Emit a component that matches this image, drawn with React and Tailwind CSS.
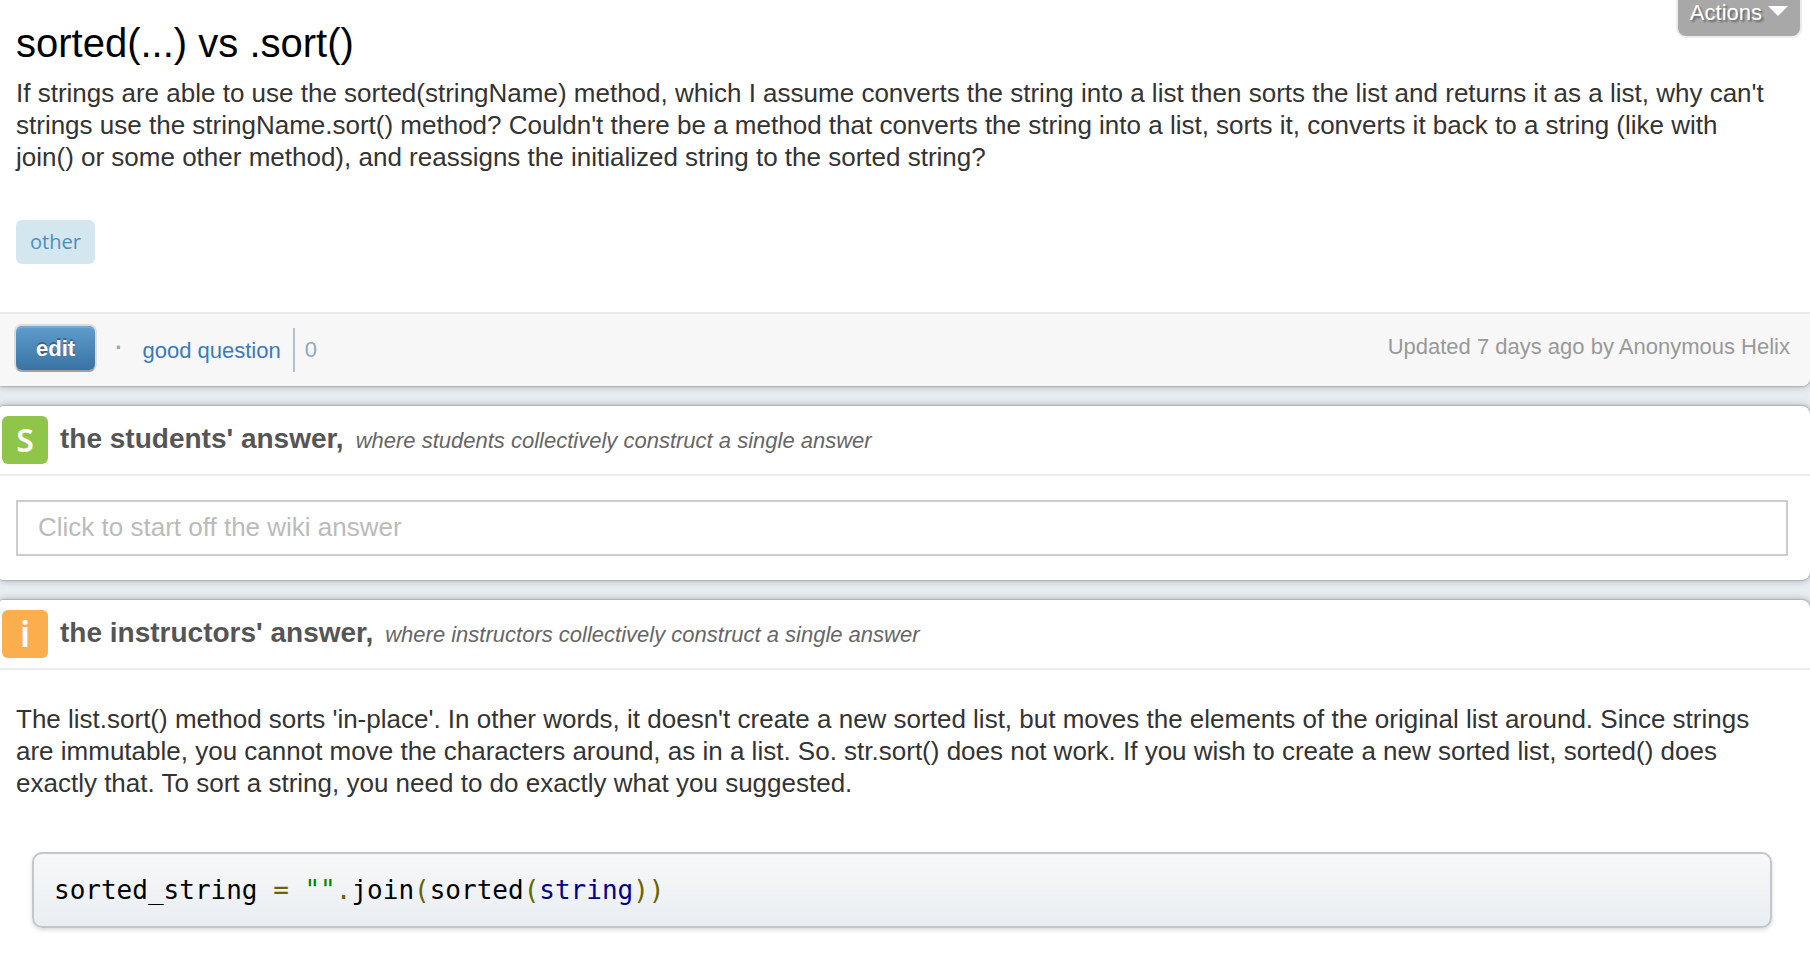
const cardShadow = "shadow-[0_0_2px_rgba(0,0,0,0.45),0_0_8px_rgba(0,0,0,0.3)]";

function AnswerHeader({ badge, title, note }) {
  return (
    <header className="flex items-center gap-3 border-b-2 border-[#ebebeb] pt-[10px] pb-[10px] pl-[2px]">
      {badge}
      <h2 className="flex items-baseline gap-3 text-[28px] leading-[44px] font-bold text-[#555555]">
        {title}
        <span className="text-[22px] font-normal text-[#666666] italic">{note}</span>
      </h2>
    </header>
  );
}

function Badge({ letter, className }) {
  return (
    <span
      className={`flex h-12 w-[46px] items-center justify-center rounded-[6px] font-['Noto_Sans',sans-serif] leading-none font-semibold text-white ${className}`}
    >
      {letter}
    </span>
  );
}

export default function App() {
  return (
    <main className="flex min-h-screen flex-col gap-5 overflow-hidden bg-[#e8edf2] font-['Liberation_Sans',Arial,sans-serif] text-[#333333]">
      <article className={`rounded-br-[8px] bg-white ${cardShadow}`}>
        <div className="relative px-4 pt-[20px] pb-12">
          <button
            type="button"
            className="absolute top-0 right-[8px] flex h-[38px] items-start gap-[6px] rounded-b-[10px] border-2 border-t-0 border-[#ebebeb] bg-[#a8a8a8] px-3 text-[22px] leading-[26px] text-white [text-shadow:2px_2px_2px_rgba(0,0,0,0.4)]"
          >
            Actions
            <svg className="mt-[6px]" width="20" height="10" viewBox="0 0 20 10" aria-hidden="true">
              <path d="M0 0H20L10 10Z" fill="#fff" />
            </svg>
          </button>
          <h1 className="text-[40px] leading-[46px] text-black">sorted(...) vs .sort()</h1>
          <p className="mt-[11px] mr-5 text-[26px] leading-8">
            If strings are able to use the sorted(stringName) method, which I assume converts the
            string into a list then sorts the list and returns it as a list, why can't strings use
            the stringName.sort() method? Couldn't there be a method that converts the string into a
            list, sorts it, converts it back to a string (like with join() or some other method),
            and reassigns the initialized string to the sorted string?
          </p>
          <a
            href="#other"
            className="mt-[47px] inline-block rounded-[6px] bg-[#d4e7f0] px-[14px] font-['Open_Sans',sans-serif] text-[20px] leading-[44px] font-medium text-[#4a8fba]"
          >
            other
          </a>
        </div>
        <footer className="flex items-center rounded-br-[8px] border-t-2 border-[#ebebeb] bg-[#f7f7f7] px-4 pt-3 pb-3">
          <button
            type="button"
            className="mb-1 h-11 rounded-[6px] bg-linear-to-b from-[#5f9dcd] to-[#3873a3] px-5 text-[22px] font-bold text-white shadow-[0_2px_0_#a0a0a0,0_0_0_2px_#dcdcdc,inset_0_2px_0_#77a9d0] [text-shadow:0_-2px_0_rgba(0,0,0,0.3)]"
          >
            edit
          </button>
          <span className="mb-1 ml-5 text-[22px] leading-6 font-bold text-[#8aa8c8]">·</span>
          <a href="#good" className="ml-5 text-[22px] text-[#3a7abf]">
            good question
          </a>
          <span className="ml-3 border-l-2 border-[#b0c1d6] pl-[10px] text-[22px] leading-[44px] text-[#8fa9c6]">
            0
          </span>
          <span className="mb-2 ml-auto pr-1 text-[22px] text-[#999999]">
            Updated 7 days ago by Anonymous Helix
          </span>
        </footer>
      </article>

      <section className={`rounded-l-[2px] rounded-r-[8px] bg-white ${cardShadow}`}>
        <AnswerHeader
          badge={<Badge letter="S" className="bg-[#8fc549] text-[32px]" />}
          title="the students' answer,"
          note="where students collectively construct a single answer"
        />
        <div className="pt-6 pr-[22px] pb-6 pl-4">
          <input
            type="text"
            aria-label="Students' answer"
            placeholder="Click to start off the wiki answer"
            className="block h-14 w-full border-2 border-[#cccccc] px-5 pb-[2px] text-[26px] placeholder:text-[#bbbbbb]"
          />
        </div>
      </section>

      <section className={`grow rounded-tl-[2px] rounded-tr-[8px] bg-white ${cardShadow}`}>
        <AnswerHeader
          badge={<Badge letter="i" className="bg-[#faae4e] text-[36px]" />}
          title="the instructors' answer,"
          note="where instructors collectively construct a single answer"
        />
        <div className="px-4 pt-[33px] pb-7">
          <p className="mr-5 text-[26px] leading-8">
            The list.sort() method sorts 'in-place'. In other words, it doesn't create a new sorted
            list, but moves the elements of the original list around. Since strings are immutable,
            you cannot move the characters around, as in a list. So. str.sort() does not work. If
            you wish to create a new sorted list, sorted() does exactly that. To sort a string, you
            need to do exactly what you suggested.
          </p>
          <pre className="mt-[53px] mr-[22px] ml-4 rounded-[10px] border-2 border-[#c2c7cc] bg-linear-to-b from-[#f8f8f9] to-[#e9eef2] px-5 py-5 font-['DejaVu_Sans_Mono',monospace] text-[26px] leading-8 text-black shadow-[0_2px_4px_rgba(0,0,0,0.15)]">
            <code className="font-['DejaVu_Sans_Mono',monospace]">
              sorted_string <span className="text-[#666600]">=</span>{" "}
              <span className="text-[#008800]">""</span>
              <span className="text-[#666600]">.</span>join
              <span className="text-[#666600]">(</span>sorted
              <span className="text-[#666600]">(</span>
              <span className="text-[#000088]">string</span>
              <span className="text-[#666600]">))</span>
            </code>
          </pre>
        </div>
      </section>
    </main>
  );
}
